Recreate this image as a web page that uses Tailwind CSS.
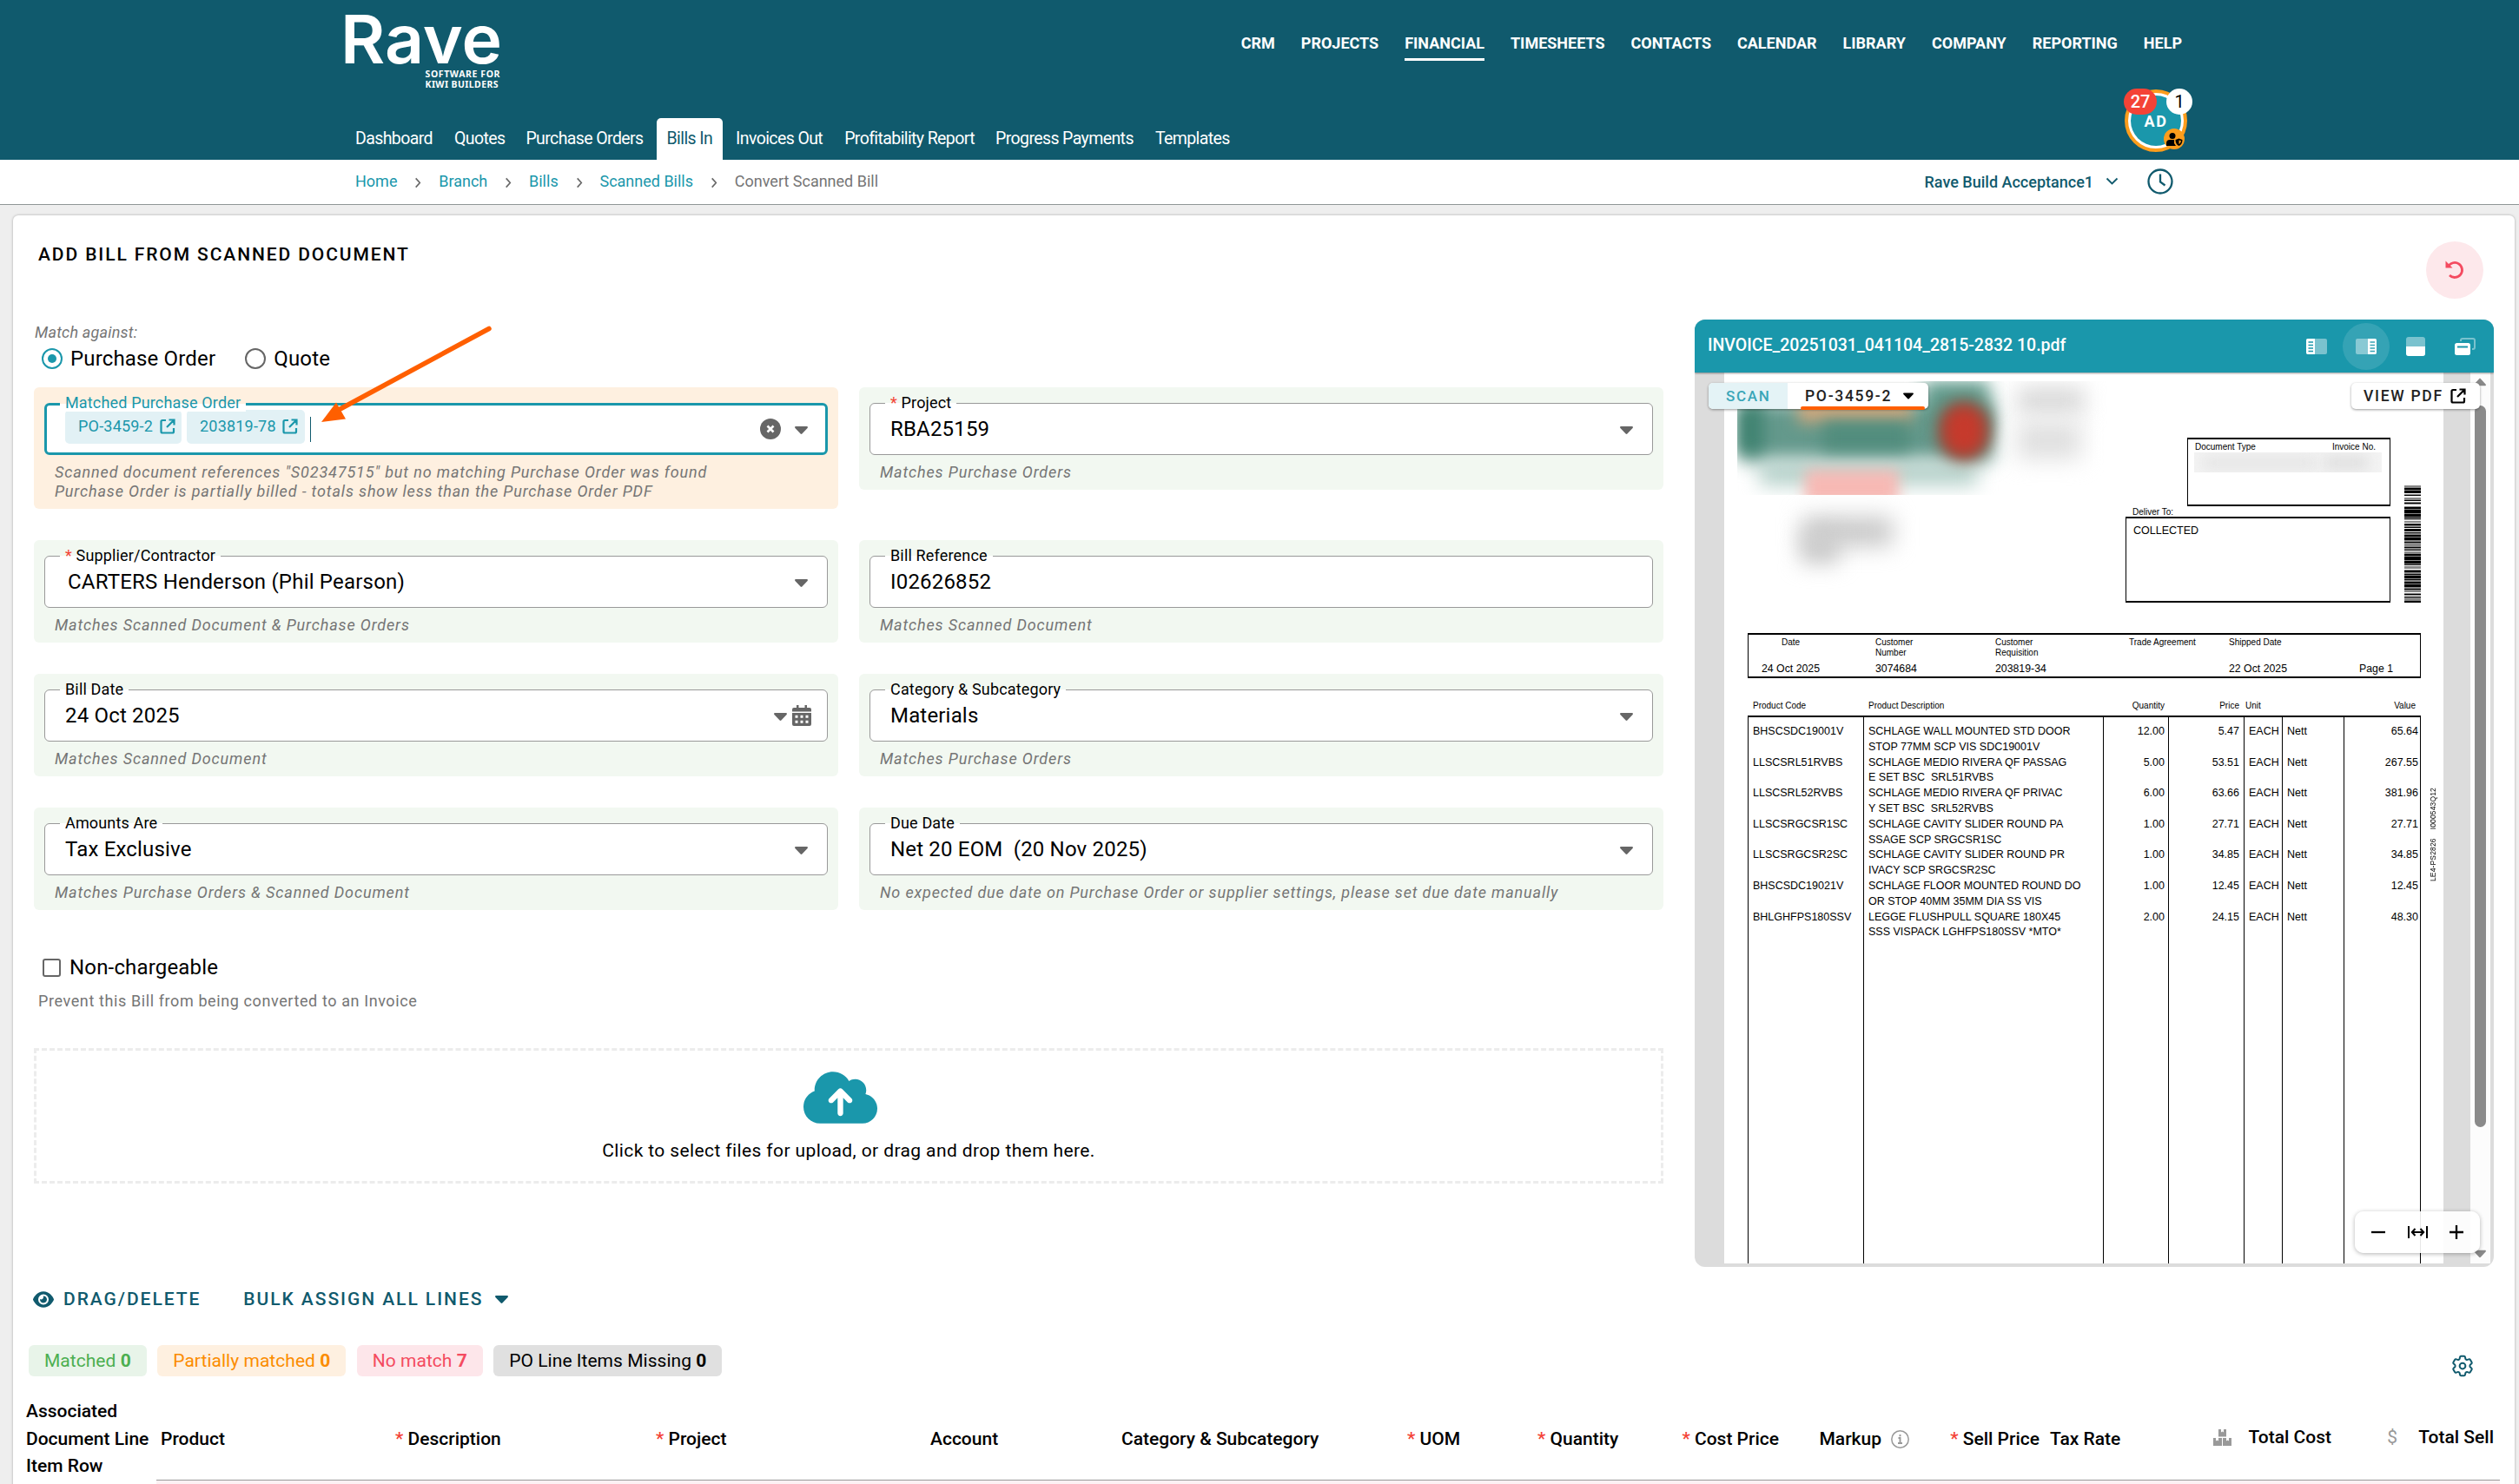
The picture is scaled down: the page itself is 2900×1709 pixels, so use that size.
<!DOCTYPE html>
<html lang="en">
<head>
  <meta charset="UTF-8">
  <title>Convert Scanned Bill - Rave</title>
  <!-- Tailwind CSS CDN -->
  <script src="https://cdn.jsdelivr.net/npm/@tailwindcss/browser@4"></script>
</head>
<body class="h-[1709px] w-[2900px] overflow-hidden bg-[#eeeeee] font-['Roboto',sans-serif] text-black">

  <!-- Shared icons -->
  <svg class="hidden">
    <symbol id="caret" viewBox="0 0 15 9"><path d="M1.2 0h12.6c1 0 1.5 1.1.8 1.9L8.400 8.500c-.5.600-1.300.600-1.800 0L.4 1.900C-.3 1.100.2 0 1.200 0z" fill="currentColor"/></symbol>
    <symbol id="chevron" viewBox="0 0 8 14"><path d="M1.500 1.500 6.500 7l-5 5.500" fill="none" stroke="currentColor" stroke-width="1.700"/></symbol>
    <symbol id="external" viewBox="0 0 18 18"><path d="M7 2H3a1.500 1.500 0 0 0-1.500 1.500V15A1.500 1.500 0 0 0 3 16.500h11.500A1.500 1.500 0 0 0 16 15v-4M10.500 1.500H16.500V7.500M16.500 1.500 8 10" fill="none" stroke="currentColor" stroke-width="2.200"/></symbol>
  </svg>

  <!-- Header -->
  <header class="h-[184px] bg-[#105a6d] pr-[388px] pl-[397px] text-white">
    <div class="flex h-[103px] items-start justify-between">
      <svg class="h-[103px] w-[184px] overflow-visible" fill="#fff">
        <text x="-5" y="73" font-family="Inter, sans-serif" font-weight="600" font-size="77" textLength="186" lengthAdjust="spacingAndGlyphs">Rave</text>
        <text x="92.500" y="89" font-family="Noto Sans, sans-serif" font-weight="700" font-size="10.500" textLength="86">SOFTWARE FOR</text>
        <text x="92.500" y="101" font-family="Noto Sans, sans-serif" font-weight="700" font-size="10.500" textLength="84">KIWI BUILDERS</text>
      </svg>
      <nav class="flex gap-[30px] pt-9 text-[18px] leading-[28px] font-bold">
        <a>CRM</a>
        <a>PROJECTS</a>
        <a class="h-[34px] border-b-3 border-white">FINANCIAL</a>
        <a>TIMESHEETS</a>
        <a>CONTACTS</a>
        <a>CALENDAR</a>
        <a>LIBRARY</a>
        <a>COMPANY</a>
        <a>REPORTING</a>
        <a>HELP</a>
      </nav>
    </div>
    <div class="flex h-[81px] items-end justify-between">
      <nav class="flex text-[19.500px] leading-[48px] tracking-[-0.600px]">
        <a class="px-3">Dashboard</a>
        <a class="pr-3 pl-[13px]">Quotes</a>
        <a class="px-3">Purchase Orders</a>
        <a class="ml-[3px] rounded-t-[5px] bg-white px-3 text-[#105a6d]">Bills In</a>
        <a class="ml-[3px] px-3">Invoices Out</a>
        <a class="pr-3 pl-[13px]">Profitability Report</a>
        <a class="px-3">Progress Payments</a>
        <a class="pr-3 pl-[13px]">Templates</a>
      </nav>
      <!-- Avatar with badges -->
      <div class="relative mr-[-6px] mb-[9px] flex size-[72px] items-center justify-center rounded-full border-[4px] border-[#fc9d1c] bg-white">
        <div class="flex size-[58px] items-center justify-center rounded-full bg-[#1a97ab] text-[18px] font-bold tracking-[1.500px]">AD</div>
        <span class="absolute -top-[5px] -left-[5px] h-[30px] w-[38px] rounded-full bg-[#f44336] text-center text-[20px] leading-[30px] font-medium">27</span>
        <span class="absolute -top-[5px] -right-[10px] size-[30px] rounded-full bg-white text-center text-[20px] leading-[30px] text-black">1</span>
        <span class="absolute right-[-1px] bottom-[-1px] flex size-6 items-center justify-center rounded-full bg-[#fc9d1c]">
          <svg class="h-[15px] w-[19px]" viewBox="0 0 19 15">
            <circle cx="7" cy="3.500" r="3.500"/>
            <path d="M0 15v-3a4 4 0 0 1 4-4h5v4l2 3z"/>
            <path d="m14.500 6.500 4 1.500c0 3.500-1.500 6-4 7-2.500-1-4-3.500-4-7z"/>
            <path d="M14.500 8.500v4.500c1.500-.8 2.300-2.300 2.400-3.900z" fill="#fc9d1c"/>
          </svg>
        </span>
      </div>
    </div>
  </header>

  <!-- Breadcrumb -->
  <div class="flex h-[52px] items-center justify-between border-b border-[#8f9696] bg-white pr-[398px] pb-[2px] pl-[409px] text-[18px] text-[#1a97ab]">
    <div class="flex items-center">
      <a>Home</a>
      <svg class="mx-[19.900px] mt-1 h-[13px] w-[8px] text-[#666]"><use href="#chevron"/></svg>
      <a>Branch</a>
      <svg class="mx-[19.900px] mt-1 h-[13px] w-[8px] text-[#666]"><use href="#chevron"/></svg>
      <a>Bills</a>
      <svg class="mx-[19.900px] mt-1 h-[13px] w-[8px] text-[#666]"><use href="#chevron"/></svg>
      <a>Scanned Bills</a>
      <svg class="mx-[19.900px] mt-1 h-[13px] w-[8px] text-[#666]"><use href="#chevron"/></svg>
      <span class="text-[#757575]">Convert Scanned Bill</span>
    </div>
    <div class="flex items-center text-[#105a6d]">
      <span class="mt-px font-medium">Rave Build Acceptance1</span>
      <svg class="ml-3.5 h-[9px] w-[15px]" viewBox="0 0 15 9"><path d="m1.500 1.500 6 6 6-6" fill="none" stroke="currentColor" stroke-width="1.800"/></svg>
      <svg class="ml-[33px] size-[30px]" viewBox="0 0 30 30" fill="none" stroke="currentColor" stroke-width="2.300"><circle cx="15" cy="15" r="13.500"/><path d="M15 6.500V15.500l5.500 4"/></svg>
    </div>
  </div>

  <!-- Card -->
  <main class="relative mt-3 mr-[5px] ml-[15px] h-[1480px] rounded-t-[6px] bg-white shadow-[0_0_3px_rgba(0,0,0,0.3)]">
    <div class="flex h-[120px] items-start justify-between pr-9 pl-[29px]">
      <h1 class="mt-[31px] text-[21px] leading-[28px] font-medium tracking-[1.900px]">ADD BILL FROM SCANNED DOCUMENT</h1>
      <button class="mt-[30px] flex size-[66px] items-center justify-center rounded-full bg-[#fde8eb]">
        <svg class="size-6" viewBox="0 0 24 24" fill="none" stroke="#f44b60" stroke-width="2.800"><path d="M4.500 8A8.500 8.500 0 1 1 6 18"/><path d="M1.500 1.500v8h8z" fill="#f44b60" stroke="none"/></svg>
      </button>
    </div>

    <div class="flex gap-9 pl-6">
      <!-- Form -->
      <div class="w-[1876px] pt-1">
        <p class="pl-px text-[18px] leading-[22px] tracking-[0.200px] text-[#757575] italic">Match against:</p>
        <div class="mt-[3px] flex items-center pl-[9px] text-[24px] leading-[32px] tracking-[0.160px]">
          <span class="flex size-6 items-center justify-center rounded-full border-2 border-[#1a97ab]"><span class="size-[10px] rounded-full bg-[#1a97ab]"></span></span>
          <span class="ml-[9px]">Purchase Order</span>
          <span class="ml-[34px] size-6 rounded-full border-2 border-[#666]"></span>
          <span class="ml-[9px]">Quote</span>
        </div>

        <div class="mt-[17px] grid grid-cols-2 items-start gap-x-6 gap-y-9">
          <div class="rounded-[6px] bg-[#fef0e0] px-3 pt-[18px] pb-[9px]">
            <div class="relative flex h-[60px] items-start rounded-[6px] border-3 border-[#1a97ab] bg-white pr-5">
              <span class="absolute -top-[13px] left-[15px] bg-linear-to-b from-[#fef0e0] from-55% to-white to-55% px-[6px] text-[18px] leading-[20px] tracking-[0.160px] text-[#1a97ab]">Matched Purchase Order</span>
              <span class="mt-[5px] ml-[21px] flex h-[39px] w-[134px] items-center rounded-[5px] bg-[#e2f1f5] pb-[2px] pl-[15px] text-[18px] tracking-[0.200px] text-[#1a97ab]">PO-3459-2<svg class="ml-2 size-[18px]"><use href="#external"/></svg></span>
              <span class="mt-[5px] ml-[6px] flex h-[39px] w-[136px] items-center rounded-[5px] bg-[#e2f1f5] pb-[2px] pl-[15px] text-[18px] tracking-[0.200px] text-[#1a97ab]">203819-78<svg class="ml-[7px] size-[18px]"><use href="#external"/></svg></span>
              <span class="mt-[13px] ml-[6px] h-[29px] w-px bg-[#105a6d]"></span>
              <svg class="mt-[15px] ml-auto size-6" viewBox="0 0 24 24"><circle cx="12" cy="12" r="12" fill="#666"/><path d="m8.500 8.500 7 7m0-7-7 7" stroke="#fff" stroke-width="2.600"/></svg>
              <svg class="mt-[24px] ml-4 h-[9px] w-[15px] text-[#666]"><use href="#caret"/></svg>
            </div>
            <p class="mt-[9px] pl-3 text-[18px] leading-[22px] tracking-[0.860px] text-[#757575] italic">Scanned document references "S02347515" but no matching Purchase Order was found<br>Purchase Order is partially billed - totals show less than the Purchase Order PDF</p>
          </div>

          <div class="rounded-[6px] bg-[#f2f8f1] px-3 pt-[18px] pb-[9px]">
            <div class="relative flex h-[60px] items-start justify-between rounded-[6px] border border-[#999] bg-white pr-[22px] pl-[23px]">
              <span class="absolute -top-[11px] left-[17px] bg-linear-to-b from-[#f2f8f1] from-50% to-white to-50% px-[6px] text-[18px] leading-[20px] tracking-[0.160px]"><span class="text-[#f44336]">*</span> Project</span>
              <span class="mt-[13px] text-[24px] leading-[32px] tracking-[0.180px]">RBA25159</span>
              <svg class="mt-[26px] h-[9px] w-[15px] text-[#666]"><use href="#caret"/></svg>
            </div>
            <p class="mt-[9px] pl-3 text-[18px] leading-[22px] tracking-[0.860px] text-[#757575] italic">Matches Purchase Orders</p>
          </div>

          <div class="rounded-[6px] bg-[#f2f8f1] px-3 pt-[18px] pb-[9px]">
            <div class="relative flex h-[60px] items-start justify-between rounded-[6px] border border-[#999] bg-white pr-[22px] pl-[26px]">
              <span class="absolute -top-[11px] left-[17px] bg-linear-to-b from-[#f2f8f1] from-50% to-white to-50% px-[6px] text-[18px] leading-[20px] tracking-[0.160px]"><span class="text-[#f44336]">*</span> Supplier/Contractor</span>
              <span class="mt-[13px] text-[24px] leading-[32px] tracking-[0.200px]">CARTERS Henderson (Phil Pearson)</span>
              <svg class="mt-[26px] h-[9px] w-[15px] text-[#666]"><use href="#caret"/></svg>
            </div>
            <p class="mt-[9px] pl-3 text-[18px] leading-[22px] tracking-[0.860px] text-[#757575] italic">Matches Scanned Document &amp; Purchase Orders</p>
          </div>

          <div class="rounded-[6px] bg-[#f2f8f1] px-3 pt-[18px] pb-[9px]">
            <div class="relative flex h-[60px] items-start justify-between rounded-[6px] border border-[#999] bg-white pr-[22px] pl-[23px]">
              <span class="absolute -top-[11px] left-[17px] bg-linear-to-b from-[#f2f8f1] from-50% to-white to-50% px-[6px] text-[18px] leading-[20px] tracking-[0.160px]">Bill Reference</span>
              <span class="mt-[13px] text-[24px] leading-[32px] tracking-[0.180px]">I02626852</span>
            </div>
            <p class="mt-[9px] pl-3 text-[18px] leading-[22px] tracking-[0.860px] text-[#757575] italic">Matches Scanned Document</p>
          </div>

          <div class="rounded-[6px] bg-[#f2f8f1] px-3 pt-[18px] pb-[9px]">
            <div class="relative flex h-[60px] items-start rounded-[6px] border border-[#999] bg-white pr-[18px] pl-[23px]">
              <span class="absolute -top-[11px] left-[17px] bg-linear-to-b from-[#f2f8f1] from-50% to-white to-50% px-[6px] text-[18px] leading-[20px] tracking-[0.160px]">Bill Date</span>
              <span class="mt-[13px] text-[24px] leading-[32px] tracking-[0.180px]">24 Oct 2025</span>
              <svg class="mt-[26px] ml-auto h-[9px] w-[15px] text-[#666]"><use href="#caret"/></svg>
              <svg class="mt-[17px] ml-[6px] h-6 w-[22px]" viewBox="0 0 22 24" fill="#666">
                <path d="M5 0h2.500v3h7V0H17v3h3a2 2 0 0 1 2 2v2.500H0V5a2 2 0 0 1 2-2h3z"/>
                <path fill-rule="evenodd" d="M0 9h22v13a2 2 0 0 1-2 2H2a2 2 0 0 1-2-2zM3.500 11.800v3h3v-3zm6 0v3h3v-3zm6 0v3h3v-3zm-12 6v3h3v-3zm6 0v3h3v-3zm6 0v3h3v-3z"/>
              </svg>
            </div>
            <p class="mt-[9px] pl-3 text-[18px] leading-[22px] tracking-[0.860px] text-[#757575] italic">Matches Scanned Document</p>
          </div>

          <div class="rounded-[6px] bg-[#f2f8f1] px-3 pt-[18px] pb-[9px]">
            <div class="relative flex h-[60px] items-start justify-between rounded-[6px] border border-[#999] bg-white pr-[22px] pl-[23px]">
              <span class="absolute -top-[11px] left-[17px] bg-linear-to-b from-[#f2f8f1] from-50% to-white to-50% px-[6px] text-[18px] leading-[20px] tracking-[0.160px]">Category &amp; Subcategory</span>
              <span class="mt-[13px] text-[24px] leading-[32px] tracking-[0.180px]">Materials</span>
              <svg class="mt-[26px] h-[9px] w-[15px] text-[#666]"><use href="#caret"/></svg>
            </div>
            <p class="mt-[9px] pl-3 text-[18px] leading-[22px] tracking-[0.860px] text-[#757575] italic">Matches Purchase Orders</p>
          </div>

          <div class="rounded-[6px] bg-[#f2f8f1] px-3 pt-[18px] pb-[9px]">
            <div class="relative flex h-[60px] items-start justify-between rounded-[6px] border border-[#999] bg-white pr-[22px] pl-[23px]">
              <span class="absolute -top-[11px] left-[17px] bg-linear-to-b from-[#f2f8f1] from-50% to-white to-50% px-[6px] text-[18px] leading-[20px] tracking-[0.160px]">Amounts Are</span>
              <span class="mt-[13px] text-[24px] leading-[32px] tracking-[0.180px]">Tax Exclusive</span>
              <svg class="mt-[26px] h-[9px] w-[15px] text-[#666]"><use href="#caret"/></svg>
            </div>
            <p class="mt-[9px] pl-3 text-[18px] leading-[22px] tracking-[0.860px] text-[#757575] italic">Matches Purchase Orders &amp; Scanned Document</p>
          </div>

          <div class="rounded-[6px] bg-[#f2f8f1] px-3 pt-[18px] pb-[9px]">
            <div class="relative flex h-[60px] items-start justify-between rounded-[6px] border border-[#999] bg-white pr-[22px] pl-[23px]">
              <span class="absolute -top-[11px] left-[17px] bg-linear-to-b from-[#f2f8f1] from-50% to-white to-50% px-[6px] text-[18px] leading-[20px] tracking-[0.160px]">Due Date</span>
              <span class="mt-[13px] text-[24px] leading-[32px] tracking-[0.180px] whitespace-pre">Net 20 EOM  (20 Nov 2025)</span>
              <svg class="mt-[26px] h-[9px] w-[15px] text-[#666]"><use href="#caret"/></svg>
            </div>
            <p class="mt-[9px] pl-3 text-[18px] leading-[22px] tracking-[0.850px] text-[#757575] italic">No expected due date on Purchase Order or supplier settings, please set due date manually</p>
          </div>
        </div>

        <div class="mt-[50px] flex items-center pl-[10px] text-[24px] leading-[32px] tracking-[0.170px]">
          <span class="size-[21px] rounded-[3px] border-2 border-[#666]"></span>
          <span class="ml-[10px]">Non-chargeable</span>
        </div>
        <p class="mt-3 pl-[5px] text-[18px] leading-[22px] tracking-[0.600px] text-[#757575]">Prevent this Bill from being converted to an Invoice</p>

        <!-- Drop zone -->
        <div class="mt-[43px] flex h-[156px] flex-col items-center border-3 border-dashed border-[#ececec] pt-6">
          <svg class="mr-[19px] h-[60px] w-[85px]" viewBox="0 32 640 448" fill="#1a97ab"><path d="M144 480C64.500 480 0 415.500 0 336c0-62.800 40.200-116.200 96.200-135.900c-.1-2.700-.2-5.400-.2-8.100c0-88.400 71.600-160 160-160c59.300 0 111 32.200 138.700 80.200C409.900 102 428.300 96 448 96c53 0 96 43 96 96c0 12.200-2.300 23.800-6.400 34.600C596 238.400 640 290.100 640 352c0 70.700-57.300 128-128 128H144zm79-217c-9.400 9.400-9.400 24.600 0 33.900s24.600 9.400 33.900 0l39-39V392c0 13.300 10.700 24 24 24s24-10.700 24-24V257.900l39 39c9.400 9.400 24.600 9.400 33.900 0s9.400-24.600 0-33.900l-80-80c-9.400-9.400-24.600-9.400-33.900 0l-80 80z"/></svg>
          <p class="mt-4 text-[21px] leading-[30px] tracking-[0.390px]">Click to select files for upload, or drag and drop them here.</p>
        </div>
      </div>

      <!-- Document viewer -->
      <div class="h-[1091px] w-[920px] overflow-hidden rounded-[12px] bg-[#dcdcdc]">
        <div class="relative z-10 flex h-[61px] items-center bg-[#1a97ab] pr-[6px] pl-[15px] text-white shadow-[0_1px_2px_rgba(0,0,0,0.4)]">
          <span class="mr-auto mb-[2px] text-[19.500px] font-medium">INVOICE_20251031_041104_2815-2832 10.pdf</span>
          <div class="flex gap-[3px]">
            <span class="flex size-[54px] items-center justify-center"><svg class="h-[18px] w-6" viewBox="0 0 24 18"><rect width="24" height="18" rx="2" fill="#fff" opacity=".42"/><path d="M2 0h8v18H2a2 2 0 0 1-2-2V2a2 2 0 0 1 2-2z" fill="#fff"/><path d="M2.500 4h5.500M2.500 7.500h5.500M2.500 11h5.500M2.500 14.500h5.500" stroke="#1a97ab" stroke-width="1.500"/></svg></span>
            <span class="flex size-[54px] items-center justify-center rounded-full bg-white/12"><svg class="h-[18px] w-6" viewBox="0 0 24 18"><rect width="24" height="18" rx="2" fill="#fff" opacity=".42"/><path d="M14 0h8a2 2 0 0 1 2 2v14a2 2 0 0 1-2 2h-8z" fill="#fff"/><path d="M16.500 4H22M16.500 7.500H22M16.500 11H22M16.500 14.500H22" stroke="#36a3b5" stroke-width="1.500"/></svg></span>
            <span class="flex size-[54px] items-center justify-center"><svg class="h-[22px] w-[22px]" viewBox="0 0 22 22"><rect width="22" height="22" rx="3" fill="#fff" opacity=".42"/><path d="M0 11h22v8a3 3 0 0 1-3 3H3a3 3 0 0 1-3-3z" fill="#fff"/></svg></span>
            <span class="flex size-[54px] items-center justify-center"><svg class="h-5 w-6" viewBox="0 0 24 20"><path d="M7 4V3a2 2 0 0 1 2-2h12a2 2 0 0 1 2 2v8a2 2 0 0 1-2 2h-1" fill="none" stroke="#fff" stroke-width="2" opacity=".42"/><rect y="6" width="18" height="14" rx="2.500" fill="#fff"/><path d="M3 10.500h12" stroke="#1a97ab" stroke-width="2"/></svg></span>
          </div>
        </div>

        <div class="relative flex h-[1026px] pl-[34px]">
          <!-- Scanned page -->
          <div class="relative w-[828px] overflow-hidden bg-white font-['Liberation_Sans',sans-serif] text-[10px] leading-[12px]">
            <!-- Redacted areas -->
            <div class="absolute top-[10px] left-[15px] h-[131px] w-[460px] overflow-hidden">
              <div class="absolute top-[24px] left-[4px] h-[68px] w-[290px] bg-[#64998c] blur-[11px]"></div>
              <div class="absolute top-[28px] left-0 h-[56px] w-[30px] bg-[#3f8270] blur-[9px]"></div>
              <div class="absolute top-0 left-[215px] h-[60px] w-[75px] bg-[#5f9a8b] blur-[10px]"></div>
              <div class="absolute top-[20px] left-[70px] h-[28px] w-[130px] bg-[#cda67c] blur-[9px]"></div>
              <div class="absolute top-[46px] left-[98px] h-[38px] w-[100px] bg-[#528d7d] blur-[9px]"></div>
              <div class="absolute top-[92px] left-[26px] h-[28px] w-[250px] bg-[#b4d0c9] blur-[11px]"></div>
              <div class="absolute top-[102px] left-[78px] h-[40px] w-[108px] bg-[#f7b9b4] blur-[8px]"></div>
              <div class="absolute top-[22px] left-[230px] h-[70px] w-[62px] rounded-full bg-[#8a5545] blur-[9px]"></div>
              <div class="absolute top-[30px] left-[239px] h-[54px] w-[44px] rounded-full bg-[#c63a2c] blur-[8px]"></div>
              <div class="absolute top-[6px] left-[322px] h-[32px] w-[78px] bg-[#dadada] blur-[12px]"></div>
              <div class="absolute top-[46px] left-[322px] h-[44px] w-[74px] bg-[#e0e0e0] blur-[13px]"></div>
            </div>
            <div class="absolute top-[166px] left-[90px] h-[34px] w-[104px] bg-[#c9c9c9] blur-[13px]"></div>
            <div class="absolute top-[184px] left-[88px] h-[36px] w-[44px] bg-[#cacaca] blur-[12px]"></div>
            <!-- Barcode -->
            <svg class="absolute top-[130px] left-[783px] h-[135px] w-[19px]" viewBox="0 0 19 135">
              <path d="M9.500 0v135" stroke="#888" stroke-width="19" stroke-dasharray="3 1 5 1 2 2 4 1 3 2 6 1"/>
              <path d="M9.500 3v132" stroke="#000" stroke-width="19" stroke-dasharray="2 1 3 2 1 5 1 2 1 4 2 1 4 1 3 1 1 6 2 2 1 1 3 1 1 2"/>
            </svg>
            <span class="absolute top-[478px] left-[811px] rotate-180 text-[8.500px] leading-[10px] tracking-[0.150px] whitespace-pre [writing-mode:vertical-rl]">LE4-PS2826    I000543Q12</span>

            <div class="mt-[75px] ml-[533px] flex h-[79px] w-[234px] justify-between border border-t-2 border-b-2 border-black pt-[3px] pr-4 pl-2">
              <span>Document Type</span>
              <span>Invoice No.</span>
            </div>
            <div class="absolute top-[92px] left-[541px] h-[23px] w-[216px] overflow-hidden bg-[#f3f3f3]">
              <div class="absolute top-[5px] left-[10px] h-[14px] w-[130px] bg-[#e4e4e4] blur-[8px]"></div>
              <div class="absolute top-[5px] left-[150px] h-[14px] w-[50px] bg-[#dcdcdc] blur-[8px]"></div>
            </div>
            <p class="h-3 pt-px pl-[470px]">Deliver To:</p>
            <div class="ml-[462px] h-[99px] w-[305px] border border-t-2 border-b-2 border-black pt-[7px] pl-2 text-[12.500px] leading-[14px]">COLLECTED</div>

            <div class="mt-[35px] ml-[27px] grid h-[52px] w-[775px] grid-cols-[146px_138px_154px_115px_150px_1fr] content-start border border-t-2 border-b-2 border-black pt-[3px]">
              <span class="pl-[38px]">Date</span>
              <span>Customer<br>Number</span>
              <span>Customer<br>Requisition</span>
              <span>Trade Agreement</span>
              <span>Shipped Date</span>
              <span></span>
              <span class="pt-[5px] pl-[15px] text-[12.300px] leading-[14px]">24 Oct 2025</span>
              <span class="pt-[5px] text-[12.300px] leading-[14px]">3074684</span>
              <span class="pt-[5px] text-[12.300px] leading-[14px]">203819-34</span>
              <span></span>
              <span class="pt-[5px] text-[12.300px] leading-[14px]">22 Oct 2025</span>
              <span class="pt-[5px] text-[12.300px] leading-[14px]">Page 1</span>
            </div>

            <div class="mt-[25px] ml-[27px] grid w-[775px] grid-cols-[133px_276px_75px_87px_44px_71px_89px] leading-[14px]">
              <span class="pl-[6px]">Product Code</span>
              <span class="pl-[6px]">Product Description</span>
              <span class="pr-1 text-right">Quantity</span>
              <span class="pr-[5px] text-right">Price</span>
              <span class="pl-[2px]">Unit</span>
              <span></span>
              <span class="pr-[6px] text-right">Value</span>
            </div>
            <div id="invoice-lines" class="mt-1 ml-[27px] grid h-[660px] w-[775px] grid-cols-[133px_276px_75px_87px_44px_71px_89px] border-t-2 border-r border-black text-[12.500px] leading-[17.800px] whitespace-pre"></div>
          </div>

          <!-- Scrollbar -->
          <div class="ml-[31px] flex w-[23px] flex-col items-center bg-[#fcfcfc] pt-[6px] pr-px">
            <svg class="h-[10px] w-[14px] rotate-180 text-[#888]"><use href="#caret"/></svg>
            <div class="mt-[22px] h-[831px] w-[13px] rounded-full bg-[#8a8a8a]"></div>
            <svg class="mt-[141px] h-[10px] w-[14px] text-[#888]"><use href="#caret"/></svg>
          </div>

          <!-- Floating toolbar -->
          <div class="absolute top-[12px] left-4 flex h-[30px] rounded-[5px] bg-white text-[17px] font-medium tracking-[1.700px] shadow-[0_1px_3px_rgba(0,0,0,0.4)]">
            <span class="w-[91px] rounded-l-[5px] bg-[#e4f3f6] pl-5 leading-[30px] text-[#3aa6b8]">SCAN</span>
            <span class="relative flex w-[162px] items-center pl-5 text-[17.500px] text-[#222]">PO-3459-2<svg class="ml-[13px] h-[8px] w-[12px] text-black"><use href="#caret"/></svg>
              <span class="absolute -bottom-px left-[15px] h-[4px] w-[143px] rounded-full bg-[#ff5f00]"></span>
            </span>
          </div>
          <div class="absolute top-[12px] left-[756px] flex h-[30px] w-[148px] items-center rounded-[5px] bg-white pl-[14px] text-[17.500px] font-medium tracking-[1.700px] text-[#222] shadow-[0_1px_3px_rgba(0,0,0,0.4)]">VIEW PDF<svg class="ml-2 size-[18px] text-black"><use href="#external"/></svg></div>
          <div class="absolute top-[966px] left-[760px] flex h-12 w-[144px] items-center justify-between rounded-[10px] bg-white/90 px-[19px] shadow-[0_1px_5px_rgba(0,0,0,0.3)]">
            <svg class="size-4" viewBox="0 0 16 16"><path d="M0 8h16" stroke="#000" stroke-width="2.300"/></svg>
            <svg class="h-[14px] w-[23px]" viewBox="0 0 23 14" fill="none" stroke="#000" stroke-width="2"><path d="M1 0v14M22 0v14M5 7h13M8.500 3 4.800 7l3.700 4M14.500 3l3.700 4-3.700 4"/></svg>
            <svg class="size-4" viewBox="0 0 16 16"><path d="M0 8h16M8 0v16" stroke="#000" stroke-width="2.300"/></svg>
          </div>
        </div>
      </div>
    </div>

    <!-- Line item actions -->
    <div class="mt-[22px] flex items-center pl-[23px] text-[21px] leading-[30px] font-medium tracking-[1.950px] text-[#105a6d]">
      <svg class="h-[19px] w-6" viewBox="0 32 576 448" fill="currentColor"><path d="M288 32c-80.800 0-145.500 36.800-192.600 80.600C48.600 156 17.300 208 2.500 243.700c-3.300 7.900-3.300 16.700 0 24.600C17.300 304 48.600 356 95.400 399.400C142.500 443.200 207.200 480 288 480s145.500-36.800 192.600-80.600c46.800-43.500 78.100-95.400 93-131.100c3.300-7.900 3.300-16.700 0-24.600c-14.900-35.700-46.200-87.700-93-131.100C433.500 68.800 368.800 32 288 32zM144 256a144 144 0 1 1 288 0 144 144 0 1 1 -288 0zm144-64c0 35.300-28.700 64-64 64c-7.100 0-13.900-1.200-20.300-3.300c-5.500-1.800-11.900 1.600-11.700 7.400c.3 6.900 1.300 13.800 3.200 20.700c13.700 51.200 66.400 81.600 117.600 67.900s81.600-66.400 67.900-117.600c-11.100-41.500-47.800-69.400-88.600-71.100c-5.800-.2-9.200 6.100-7.400 11.700c2.100 6.400 3.300 13.200 3.300 20.300z"/></svg>
      <span class="ml-[11px]">DRAG/DELETE</span>
      <span class="ml-[49px]">BULK ASSIGN ALL LINES</span>
      <svg class="ml-[14px] h-[9px] w-[15px]"><use href="#caret"/></svg>
    </div>
    <div class="mt-[38px] flex h-9 gap-[12.500px] pr-12 pl-[18px] text-[21px] leading-[36px] tracking-[0.030px]">
      <span class="rounded-[6px] bg-[#e8f4e9] px-[18px] text-[#4caf50]">Matched <b>0</b></span>
      <span class="rounded-[6px] bg-[#fef0e0] px-[18px] text-[#fb8c00]">Partially matched <b>0</b></span>
      <span class="rounded-[6px] bg-[#fde6ea] px-[18px] text-[#f44b60]">No match <b>7</b></span>
      <span class="rounded-[6px] bg-[#e0e0e0] px-[18px]">PO Line Items Missing <b>0</b></span>
      <svg class="mt-[9px] -mr-[3px] ml-auto size-[30px]" viewBox="0 0 24 24" fill="none" stroke="#105a6d" stroke-width="1.600"><path d="M9.594 3.940c.09-.542.560-.940 1.110-.940h2.593c.550 0 1.020.398 1.110.940l.213 1.281c.063.374.313.686.645.870.074.040.147.083.220.127.325.196.720.257 1.075.124l1.217-.456a1.125 1.125 0 0 1 1.370.490l1.296 2.247a1.125 1.125 0 0 1-.260 1.431l-1.003.827c-.293.241-.438.613-.430.992a7.723 7.723 0 0 1 0 .255c-.008.378.137.750.430.991l1.004.827c.424.350.534.955.260 1.430l-1.298 2.247a1.125 1.125 0 0 1-1.369.491l-1.217-.456c-.355-.133-.750-.072-1.076.124a6.470 6.470 0 0 1-.220.128c-.331.183-.581.495-.644.869l-.213 1.281c-.090.543-.560.940-1.110.940h-2.594c-.550 0-1.019-.398-1.110-.940l-.213-1.281c-.062-.374-.312-.686-.644-.870a6.520 6.520 0 0 1-.220-.127c-.325-.196-.720-.257-1.076-.124l-1.217.456a1.125 1.125 0 0 1-1.369-.490l-1.297-2.247a1.125 1.125 0 0 1 .260-1.431l1.004-.827c.292-.240.437-.613.430-.991a6.932 6.932 0 0 1 0-.255c.007-.380-.138-.751-.430-.992l-1.004-.827a1.125 1.125 0 0 1-.260-1.430l1.297-2.247a1.125 1.125 0 0 1 1.370-.491l1.216.456c.356.133.751.072 1.076-.124.072-.044.146-.086.220-.128.332-.183.582-.495.644-.869l.214-1.280Z"/><circle cx="12" cy="12" r="2.700"/></svg>
    </div>

    <!-- Line items table -->
    <div class="mt-6 ml-[15px] grid h-[95px] w-[2848px] grid-cols-[150px_270px_300px_315px_220px_329px_150px_140px_150px_150px_150px_150px_187px_187px] items-center pt-px text-[21px] leading-[31.500px] font-medium">
      <span>Associated<br>Document Line<br>Item Row</span>
      <span class="pl-[5px]">Product</span>
      <span class="pl-[5px]"><span class="text-[#f44336]">*</span> Description</span>
      <span class="pl-[5px]"><span class="text-[#f44336]">*</span> Project</span>
      <span class="pl-[6px]">Account</span>
      <span class="pl-[6px]">Category &amp; Subcategory</span>
      <span class="pl-[6px]"><span class="text-[#f44336]">*</span> UOM</span>
      <span class="pl-[6px]"><span class="text-[#f44336]">*</span> Quantity</span>
      <span class="pr-[6px] text-right"><span class="text-[#f44336]">*</span> Cost Price</span>
      <span class="flex items-center justify-end pr-[6px]">Markup
        <svg class="ml-[11px] size-[21px]" viewBox="0 0 21 21" fill="none" stroke="#999" stroke-width="1.500"><circle cx="10.500" cy="10.500" r="9.700"/><path d="M8.500 9h2v6M8 15h5M10.500 5v2.200" stroke-width="1.900"/></svg>
      </span>
      <span class="pr-[6px] text-right"><span class="text-[#f44336]">*</span> Sell Price</span>
      <span class="pl-[6px]">Tax Rate</span>
      <span class="mb-[3px] flex items-center justify-end pr-[7px]">
        <svg class="mr-[19px] h-[19px] w-[21px]" viewBox="0 0 21 19" fill="#999"><path d="M6 0h3v3.500l1.500-1 1.500 1V0h3v8.500H6zM0 10h3v3.500l1.500-1 1.500 1V10h4v9H0zM11 10h4v3.500l1.500-1 1.500 1V10h3v9H11z"/></svg>
        Total Cost
      </span>
      <span class="mb-[3px] flex items-center justify-end pr-[7px]"><span class="mr-[24px] font-normal text-[#999]">$</span>Total Sell</span>
    </div>
    <div class="ml-[165px] h-3 w-[2698px] border-t border-[#999] bg-[#fdf1f3]"></div>
  </main>

  <!-- Callout arrow -->
  <svg class="absolute top-[370px] left-[360px] h-[125px] w-[215px]" viewBox="0 0 215 125">
    <path d="M203 8.500 28 103" stroke="#ff5f00" stroke-width="5.500" stroke-linecap="round"/>
    <path d="M10 116 27 93.500l11 19z" fill="#ff5f00"/>
  </svg>

  <script>
    // Invoice columns, one entry per line of print
    const columns = [
      { cls: 'border-l border-black pt-[8px] pl-[5px]', lines: ['BHSCSDC19001V', '', 'LLSCSRL51RVBS', '', 'LLSCSRL52RVBS', '', 'LLSCSRGCSR1SC', '', 'LLSCSRGCSR2SC', '', 'BHSCSDC19021V', '', 'BHLGHFPS180SSV'] },
      { cls: 'border-l border-black pt-[8px] pl-[5px]', lines: [
        'SCHLAGE WALL MOUNTED STD DOOR', 'STOP 77MM SCP VIS SDC19001V',
        'SCHLAGE MEDIO RIVERA QF PASSAG', 'E SET BSC  SRL51RVBS',
        'SCHLAGE MEDIO RIVERA QF PRIVAC', 'Y SET BSC  SRL52RVBS',
        'SCHLAGE CAVITY SLIDER ROUND PA', 'SSAGE SCP SRGCSR1SC',
        'SCHLAGE CAVITY SLIDER ROUND PR', 'IVACY SCP SRGCSR2SC',
        'SCHLAGE FLOOR MOUNTED ROUND DO', 'OR STOP 40MM 35MM DIA SS VIS',
        'LEGGE FLUSHPULL SQUARE 180X45', 'SSS VISPACK LGHFPS180SSV *MTO*'] },
      { cls: 'border-l border-black pt-[8px] pr-[4px] text-right', lines: ['12.00', '', '5.00', '', '6.00', '', '1.00', '', '1.00', '', '1.00', '', '2.00'] },
      { cls: 'border-l border-black pt-[8px] pr-[5px] text-right', lines: ['5.47', '', '53.51', '', '63.66', '', '27.71', '', '34.85', '', '12.45', '', '24.15'] },
      { cls: 'border-l border-black pt-[8px] pl-[5px]', lines: ['EACH', '', 'EACH', '', 'EACH', '', 'EACH', '', 'EACH', '', 'EACH', '', 'EACH'] },
      { cls: 'border-l border-black pt-[8px] pl-[5px]', lines: ['Nett', '', 'Nett', '', 'Nett', '', 'Nett', '', 'Nett', '', 'Nett', '', 'Nett'] },
      { cls: 'border-l border-black pt-[8px] pr-[3px] text-right', lines: ['65.64', '', '267.55', '', '381.96', '', '27.71', '', '34.85', '', '12.45', '', '48.30'] }
    ];

    const invoiceLines = document.getElementById('invoice-lines');
    columns.forEach(({ cls, lines }) => {
      const col = document.createElement('div');
      col.className = cls;
      col.textContent = lines.join('\n');
      invoiceLines.appendChild(col);
    });
  </script>
</body>
</html>
